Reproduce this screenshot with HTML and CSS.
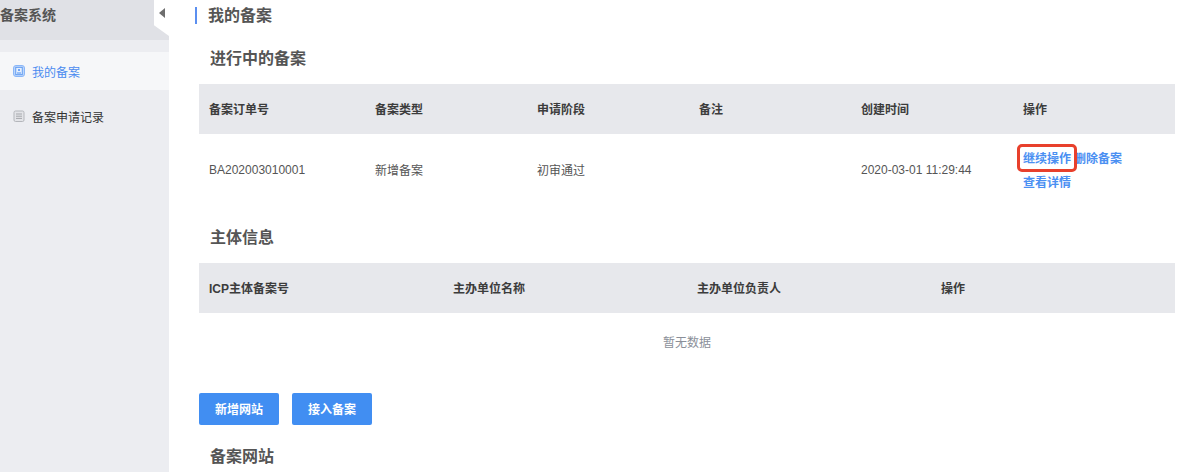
FILE: index.html
```html
<!DOCTYPE html>
<html lang="zh">
<head>
<meta charset="utf-8">
<title>备案系统</title>
<link rel="stylesheet" href="styles.css">
</head>
<body>
<div class="app">
  <aside class="sidebar">
    <div class="side-title">备案系统</div>
    <nav class="side-nav">
      <a class="side-item active">
        <svg class="side-icon" viewBox="0 0 12 12" width="12" height="12"><rect x="0.5" y="0.5" width="11" height="11" rx="2.5" fill="#bcd6fb" stroke="#8ab6f7"/><rect x="2.8" y="2.3" width="6.4" height="7.4" fill="#e6f0fe" stroke="#4a8ef0" stroke-width="0.8"/><circle cx="6" cy="5" r="1" fill="#4a8ef0"/><path d="M4 8h4" stroke="#4a8ef0"/></svg>
        <span>我的备案</span>
      </a>
      <a class="side-item">
        <svg class="side-icon" viewBox="0 0 12 12" width="12" height="12"><rect x="1" y="1" width="10" height="10.5" rx="1.5" fill="#e3e4e8" stroke="#b4b6bb"/><path d="M3 4h6M3 6.2h6M3 8.4h6" stroke="#a5a7ac"/></svg>
        <span>备案申请记录</span>
      </a>
    </nav>
    <div class="collapse"><span class="collapse-arrow"></span></div>
  </aside>
  <main class="main">
    <h1 class="page-title">我的备案</h1>
    <h2 class="section-title first">进行中的备案</h2>
    <div class="table cols-6">
      <div class="row head">
        <div>备案订单号</div><div>备案类型</div><div>申请阶段</div><div>备注</div><div>创建时间</div><div>操作</div>
      </div>
      <div class="row body">
        <div>BA202003010001</div><div>新增备案</div><div>初审通过</div><div></div><div>2020-03-01 11:29:44</div>
        <div class="actions"><a class="link highlighted">继续操作</a><a class="link">删除备案</a><a class="link">查看详情</a></div>
      </div>
    </div>
    <h2 class="section-title second">主体信息</h2>
    <div class="table cols-4">
      <div class="row head">
        <div>ICP主体备案号</div><div>主办单位名称</div><div>主办单位负责人</div><div>操作</div>
      </div>
      <div class="empty">暂无数据</div>
    </div>
    <div class="buttons">
      <button class="btn">新增网站</button>
      <button class="btn">接入备案</button>
    </div>
    <h2 class="section-title third">备案网站</h2>
  </main>
</div>
</body>
</html>
```
FILE: styles.css
```css
* { box-sizing: border-box; }
html, body { margin: 0; padding: 0; height: 472px; overflow: hidden; background: #fff; }
body { font-family: "Liberation Sans", "Noto Sans CJK SC", sans-serif; color: #4a4a4a; }
.app { display: flex; height: 472px; }

.sidebar { position: relative; flex: 0 0 169px; background: #ecedf1; }
.side-title { height: 40px; background: #e0e1e6; font-size: 14px; font-weight: 700; line-height: 30px; color: #555; }
.side-nav { padding-top: 12px; display: flex; flex-direction: column; }
.side-item { height: 38px; padding-left: 13px; display: flex; align-items: center; gap: 7px; font-size: 12px; color: #333; margin-bottom: 7px; }
.side-item.active { background: #f6f7f9; color: #4a8bf0; }
.side-icon { flex: none; }
.collapse { position: absolute; top: 0; left: 154px; width: 15px; height: 36px; background: #fff; clip-path: polygon(0 0, 100% 0, 100% 100%, 0 70%); }
.collapse-arrow { position: absolute; top: 8px; left: 5px; border: 5px solid transparent; border-left: 0; border-right: 6px solid #6e6e6e; }

.main { flex: 1; padding: 0 27px 0 30px; min-width: 0; }
.page-title { margin: 7px 0 0 -4px; height: 17px; border-left: 2px solid #5b8ff0; padding-left: 11px; font-size: 16px; font-weight: 700; line-height: 17px; color: #555; }
.section-title { margin: 0; padding-left: 11px; font-size: 16px; font-weight: 700; line-height: 22px; color: #555; }
.section-title.first { margin-top: 24px; }
.section-title.second { margin-top: 20px; }
.section-title.third { margin-top: 21px; }

.table { margin-top: 14px; font-size: 12px; }
.row { display: grid; align-items: center; }
.cols-6 .row { grid-template-columns: 166px 162px 162px 162px 162px 1fr; }
.cols-4 .row { grid-template-columns: repeat(4, 244px); }
.row > div { padding-left: 10px; }
.head { height: 50px; padding-bottom: 2px; background: #e7e8ec; color: #3c3c3c; font-weight: 700; }
.body { height: 73px; color: #555; }
.body > div { padding-bottom: 2px; }
.body > .actions { padding-bottom: 0; line-height: 24px; display: flex; flex-wrap: wrap; width: 130px; }
.link { color: #4a8ff2; font-weight: 700; white-space: nowrap; }
.highlighted { position: relative; margin-right: 3px; }
.highlighted::after { content: ""; position: absolute; left: -6px; right: -6px; top: -3px; bottom: -1px; border: 3px solid #e8402c; border-radius: 5px; }
.empty { height: 58px; padding-bottom: 2px; display: flex; align-items: center; justify-content: center; color: #8a8f99; }

.buttons { display: flex; gap: 13px; margin-top: 22px; }
.btn { width: 80px; height: 32px; padding: 0 0 2px; border: 0; border-radius: 2px; background: #418ef2; color: #fff; font: 700 12px "Liberation Sans", "Noto Sans CJK SC", sans-serif; }
```
